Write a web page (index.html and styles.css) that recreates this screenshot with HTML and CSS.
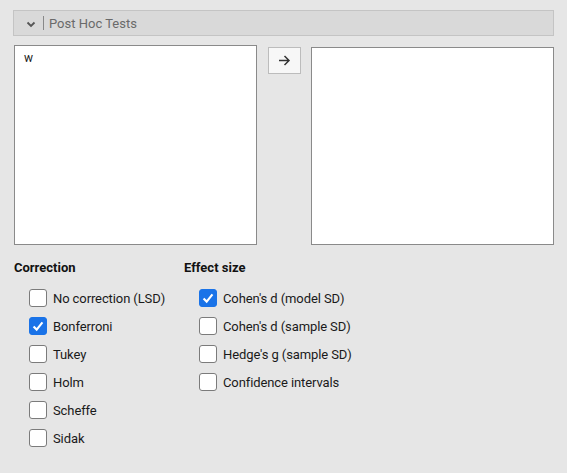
FILE: index.html
```html
<!DOCTYPE html>
<html>
<head>
<meta charset="utf-8">
<link rel="stylesheet" href="styles.css">
</head>
<body>
<div class="panel">
  <div class="header">
    <svg class="chev" width="10" height="7" viewBox="0 0 10 7"><path d="M1.5 1.5 L5 5 L8.5 1.5" fill="none" stroke="#555" stroke-width="1.8"/></svg>
    <span class="sep"></span>
    <span class="title">Post Hoc Tests</span>
  </div>
  <div class="lists">
    <div class="listbox left"><div class="item">w</div></div>
    <div class="btn-col">
      <div class="arrow-btn">
        <svg width="13" height="11" viewBox="0 0 13 11"><path d="M1 5.5 H11 M6.5 1 L11 5.5 L6.5 10" fill="none" stroke="#333" stroke-width="1.5"/></svg>
      </div>
    </div>
    <div class="listbox right"></div>
  </div>
  <div class="options">
    <div class="group corr">
      <div class="heading">Correction</div>
      <div class="opt"><span class="cb"></span><span>No correction (LSD)</span></div>
      <div class="opt"><span class="cb on"><svg viewBox="0 0 18 18"><path d="M4 9.5 L7.5 13 L14 5" fill="none" stroke="#fff" stroke-width="2.4"/></svg></span><span>Bonferroni</span></div>
      <div class="opt"><span class="cb"></span><span>Tukey</span></div>
      <div class="opt"><span class="cb"></span><span>Holm</span></div>
      <div class="opt"><span class="cb"></span><span>Scheffe</span></div>
      <div class="opt"><span class="cb"></span><span>Sidak</span></div>
    </div>
    <div class="group eff">
      <div class="heading">Effect size</div>
      <div class="opt"><span class="cb on"><svg viewBox="0 0 18 18"><path d="M4 9.5 L7.5 13 L14 5" fill="none" stroke="#fff" stroke-width="2.4"/></svg></span><span>Cohen's d (model SD)</span></div>
      <div class="opt"><span class="cb"></span><span>Cohen's d (sample SD)</span></div>
      <div class="opt"><span class="cb"></span><span>Hedge's g (sample SD)</span></div>
      <div class="opt"><span class="cb"></span><span>Confidence intervals</span></div>
    </div>
  </div>
</div>
</body>
</html>
```
FILE: styles.css
```css
html, body {
  margin: 0;
  padding: 0;
  background: #e6e6e6;
  font-family: Roboto, "Liberation Sans", sans-serif;
  font-size: 13px;
  color: #222;
}
.panel {
  padding: 10px 13px 0 13px;
}
.header {
  height: 24px;
  border: 1px solid #c4c4c4;
  background: #d9d9d9;
  display: flex;
  align-items: center;
}
.chev {
  margin-left: 12px;
  margin-top: 2px;
}
.sep {
  width: 1px;
  height: 14px;
  background: #888;
  margin-left: 7px;
}
.title {
  margin-left: 5px;
  color: #6a6a6a;
  font-size: 13px;
}
.lists {
  display: flex;
  margin-top: 9px;
  margin-left: 1px;
}
.listbox {
  background: #fff;
  border: 1px solid #8a8a8a;
  box-sizing: border-box;
  width: 243px;
}
.left {
  height: 200px;
}
.right {
  height: 198px;
  margin-top: 2px;
}
.item {
  padding: 5px 0 0 9px;
  font-size: 12px;
  color: #222;
}
.btn-col {
  width: 54px;
  display: flex;
  justify-content: center;
  padding-top: 2px;
}
.arrow-btn {
  width: 33px;
  height: 27px;
  box-sizing: border-box;
  border: 1px solid #bcbcbc;
  background: #f7f7f7;
  display: flex;
  align-items: center;
  justify-content: center;
}
.options {
  display: flex;
  margin-top: 14px;
  margin-left: 1px;
}
.group.corr {
  width: 170px;
}
.heading {
  font-weight: bold;
  font-size: 13px;
  color: #111;
  height: 17px;
  line-height: 17px;
  margin-bottom: 8px;
}
.opt {
  display: flex;
  align-items: center;
  height: 28px;
  margin-left: 15px;
  color: #1a1a1a;
  letter-spacing: -0.1px;
}
.cb {
  width: 18px;
  height: 18px;
  box-sizing: border-box;
  border: 1px solid #7b7b7b;
  border-radius: 3px;
  background: #fff;
  margin-right: 6px;
  display: flex;
}
.cb.on {
  background: #1a73e8;
  border-color: #1a73e8;
}
.cb svg {
  width: 16px;
  height: 16px;
}
```
